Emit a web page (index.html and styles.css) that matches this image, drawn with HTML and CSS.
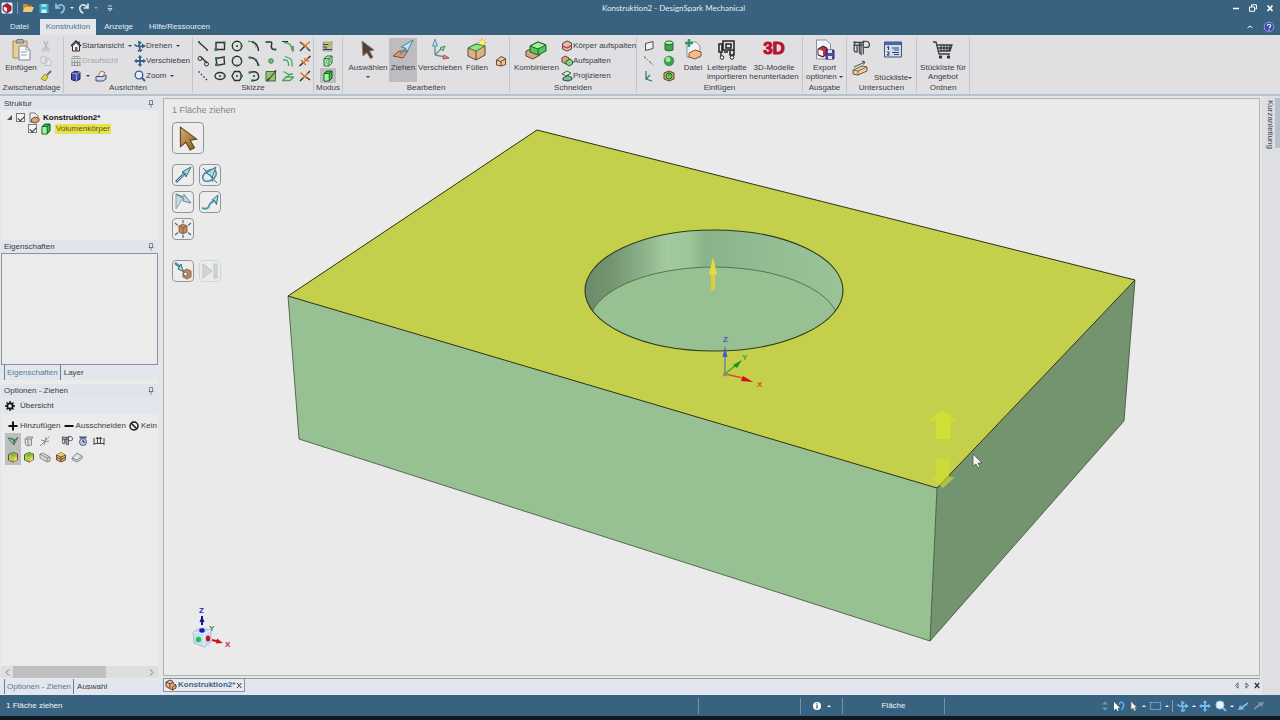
FILE: index.html
```html
<!DOCTYPE html>
<html lang="de">
<head>
<meta charset="utf-8">
<title>Konstruktion2 - DesignSpark Mechanical</title>
<link rel="stylesheet" href="styles.css">
</head>
<body>
<svg class="sprite" aria-hidden="true">
  <defs>
    <linearGradient id="wall" x1="585" x2="843" y1="0" y2="0" gradientUnits="userSpaceOnUse">
      <stop offset="0" stop-color="#6c8a6b"/><stop offset=".1" stop-color="#74946f"/><stop offset=".22" stop-color="#8bb089"/>
      <stop offset=".32" stop-color="#a4cba0"/><stop offset=".41" stop-color="#9cc599"/><stop offset=".47" stop-color="#8ab28b"/>
      <stop offset=".6" stop-color="#8fb990"/><stop offset="1" stop-color="#9ac498"/>
    </linearGradient>
    <linearGradient id="gold" x1="0" x2="1" y1="0" y2="1"><stop offset="0" stop-color="#d2ac70"/><stop offset="1" stop-color="#8a5e24"/></linearGradient>
    <clipPath id="hole"><ellipse cx="714" cy="290.500" rx="129" ry="60.500"/></clipPath>
  </defs>
  <symbol id="cube-green" viewBox="0 0 12 12"><path d="M2 3.500 5 1h5v7L7 11H2z" fill="#2fc43c" stroke="#14501b"/><path d="M2.500 4H7v6.500H2.500z" fill="#a6f0a6"/><path d="M2 3.500h5.200V11M7.200 3.500 10 1" fill="none" stroke="#14501b" stroke-width=".8"/></symbol>
  <symbol id="cube-tan" viewBox="0 0 12 12"><path d="M1.500 4 6 1.500 10.500 4v5L6 11 1.500 9z" fill="#dba878" stroke="#5b3a20" stroke-width=".8"/><path d="M1.500 4 6 1.500 10.500 4 6 6z" fill="#e6d668"/><path d="M1.500 4 6 6v5M6 6l4.500-2M2 6.500 6 8.500l4.500-2.200" fill="none" stroke="#5b3a20" stroke-width=".8"/></symbol>
  <symbol id="cube-lime" viewBox="0 0 12 12"><path d="M1.500 3.500 6 1.500 10.500 3v5.500L6 11 1.500 9z" fill="#dba878" stroke="#4b4a20" stroke-width=".9"/><path d="M1.500 3.500 6 1.500 10.500 3 6 5.500z" fill="#67c33d"/><path d="M2 5l4 1v4.500L2 9z" fill="#a2d83c"/><path d="M7 7l3-1v2.500l-3 2z" fill="#f2e23a"/></symbol>
  <symbol id="pin" viewBox="0 0 6 8"><path d="M1.500.5h3v4h-3zM.5 4.500h5M3 4.500v3" fill="none" stroke="#6f7785" stroke-width=".9"/></symbol>
  <symbol id="caliper" viewBox="0 0 16 14"><path d="M1 2h10M1 4.500h9M2.500 1v3.500q-1.500 3 0 6M4.500 4.500v6l-2 0M6.500 2v9l1.500 1.500V2M10 12.500V1h3q2.500.5 2.500 3T13 6.500h-3" fill="none" stroke="#3f444c" stroke-width="1.100"/></symbol>
  <symbol id="move" viewBox="0 0 12 12"><path d="M6 0 8.300 2.800H6.900v2.300h2.300V3.700L12 6 9.200 8.300V6.900H6.900v2.300h1.400L6 12 3.700 9.200h1.400V6.900H2.800v1.400L0 6l2.800-2.300v1.400h2.300V2.800H3.700z" fill="currentColor"/></symbol>
  <symbol id="spin" viewBox="0 0 12 12"><path d="M4 .5 8 2.500 4.500 4.800zM8 8.500l4-2.500-4-2.500z" fill="currentColor"/><path d="M6.500 2.500Q4.500 4 5.500 7T4 11.500M.5 4.500Q3 7.500 8.500 6M8 9.500 6 11.500" fill="none" stroke="currentColor" stroke-width="1.600"/></symbol>
</svg>

<div class="app">
  <header class="titlebar">
    <div class="quick">
      <svg width="12" height="12" viewBox="0 0 12 12"><rect x=".5" y=".5" width="11" height="11" rx="1.500" fill="#f4f2f4"/><path d="M2 4l4-2.500L10 4v4.500L6 11 2 8.500z" fill="#b91b34" stroke="#4b1220" stroke-width=".7"/><path d="M2.800 4.500 6 6v4L2.800 8z" fill="#fff"/></svg>
      <i class="tick"></i>
      <button aria-label="Öffnen"><svg width="12" height="12" viewBox="0 0 12 12"><path d="M1 2h4l1 1.500h4V10H1z" fill="#c88c34"/><path d="M1 10 3 5h9l-2 5z" fill="#f1c67a"/></svg></button>
      <button aria-label="Speichern"><svg width="12" height="12" viewBox="0 0 12 12"><path d="M1.500 2h9v9h-9z" fill="#35aecb"/><path d="M3.500 2h5v3h-5z" fill="#8fe0ee"/><path d="M3.500 7.500h5V11h-5z" fill="#e3eef2"/></svg></button>
      <button aria-label="Rückgängig"><svg width="12" height="12" viewBox="0 0 12 12"><path d="M2 1.500V6h4.500M2.500 5.500Q5 2 8 3t2 4.500T6.500 11" fill="none" stroke="#8ec3ee" stroke-width="1.700"/></svg></button>
      <b class="caret"></b>
      <button aria-label="Wiederholen"><svg width="12" height="12" viewBox="0 0 12 12"><path d="M10 1.500V6H5.500M9.500 5.500Q7 2 4 3T2 7.500 5.500 11" fill="none" stroke="#d9e2ea" stroke-width="1.700"/></svg></button>
      <b class="caret dim"></b>
      <button class="custom" aria-label="Symbolleiste anpassen"><svg width="6" height="7" viewBox="0 0 6 7"><path d="M1 1h4M1 3.500h4L3 6z" fill="none" stroke="#d9e2ea" stroke-width=".9"/></svg></button>
    </div>
    <h1>Konstruktion2 - DesignSpark Mechanical</h1>
    <div class="wincontrols">
      <button aria-label="Minimieren"><svg width="8" height="8" viewBox="0 0 8 8"><path d="M1 4.500h6" stroke="#fff" stroke-width="1.500"/></svg></button>
      <button aria-label="Wiederherstellen"><svg width="8" height="8" viewBox="0 0 8 8"><path d="M.5 3h5v4.300h-5zM2.500 3V.8h5V5h-2" fill="none" stroke="#fff"/></svg></button>
      <button aria-label="Schließen"><svg width="8" height="8" viewBox="0 0 8 8"><path d="M1.500 1.500l5 5.500M6.500 1.500l-5 5.500" stroke="#fff" stroke-width="1.700"/></svg></button>
    </div>
  </header>

  <nav class="menubar">
    <button>Datei</button>
    <button class="active">Konstruktion</button>
    <button>Anzeige</button>
    <button>Hilfe/Ressourcen</button>
    <span class="grow"></span>
    <button class="icon" aria-label="Menüband minimieren"><svg width="6" height="4" viewBox="0 0 6 4"><path d="M.5 3 3 1l2.500 2" fill="none" stroke="#fff"/></svg></button>
    <button class="icon" aria-label="Hilfe"><svg width="12" height="12" viewBox="0 0 12 12"><circle cx="6" cy="6" r="4.800" fill="#3b4ba8" stroke="#8f9bd6"/><path d="M4.300 4.800Q4.500 3.200 6 3.200t1.700 1.500Q7.700 5.500 6 6.700M6 8.200v1.300" fill="none" stroke="#fff" stroke-width="1.100"/></svg></button>
  </nav>

  <section class="ribbon">
    <div class="group">
      <div class="tools">
        <button class="big w34"><svg width="20" height="24" viewBox="0 0 20 24"><path d="M2 3h14v17H2z" fill="#e9cf95" stroke="#a58c55"/><path d="M6 1.500h6l1 3.500H5z" fill="#aeb4bd" stroke="#777"/><path d="M8 8h7l4 4v10H8z" fill="#f5f7fa" stroke="#7e8798"/><path d="M15 8v4h4M10 14h6M10 17h6" fill="none" stroke="#9aa3b6"/></svg><span>Einfügen</span></button>
        <div class="stack">
          <button aria-label="Ausschneiden"><svg width="12" height="12" viewBox="0 0 12 12"><path d="M4 1l3 7M8 1 5 8" stroke="#b3b5ba" stroke-width="1.300"/><circle cx="4" cy="9.500" r="1.500" fill="none" stroke="#b3b5ba"/><circle cx="8" cy="9.500" r="1.500" fill="none" stroke="#b3b5ba"/></svg></button>
          <button aria-label="Kopieren"><svg width="12" height="12" viewBox="0 0 12 12"><path d="M1 2h5l1 1.500V8H1zM5 4h4l2 2v4.500H5z" fill="#e8e8ea" stroke="#bcbec3"/></svg></button>
          <button aria-label="Format übertragen"><svg width="12" height="12" viewBox="0 0 12 12"><path d="M11 1 7 5" stroke="#60708d" stroke-width="2"/><path d="M5 4l3 3-3 4-4-2.500z" fill="#dcd93a" stroke="#7c7927" stroke-width=".8"/></svg></button>
        </div>
      </div>
      <h2>Zwischenablage</h2>
    </div>

    <div class="group">
      <div class="tools">
        <div class="stack w64">
          <button class="row"><svg width="12" height="12" viewBox="0 0 12 12"><path d="M1 6 6 1l5 5M9 1.500V4" fill="none" stroke="#2b2432" stroke-width="1.300"/><path d="M2.500 6 6 2.500 9.500 6v5h-7z" fill="#f6f3ee" stroke="#2b2432"/><path d="M5 7h2.500v4H5z" fill="#8b5a2c"/></svg><span>Startansicht</span><b class="caret"></b></button>
          <button class="row" disabled><svg width="12" height="12" viewBox="0 0 12 12"><path d="M1 3.500h10M2.500 1.500h7M2 5v6M4.500 5v6M7.500 5v6M10 5v6M1.500 10.500h9M2 7.500h8" fill="none" stroke="#999"/></svg><span>Draufsicht</span></button>
          <div class="row"><button aria-label="Ansichten"><svg width="12" height="12" viewBox="0 0 12 12"><path d="M1.500 3 5 1.200l5 1v7L6.500 11l-5-1.200z" fill="#4a4aa8" stroke="#26265e"/><path d="M1.500 3l5 1V11M6.500 4 10 2.200" fill="none" stroke="#b9b9ea" stroke-width=".8"/></svg></button><b class="caret"></b><button class="pad" aria-label="Blickrichtung"><svg width="12" height="12" viewBox="0 0 12 12"><path d="M1 6.500h7l3-1.500v4l-3 2H1z" fill="#cfd4ee" stroke="#444a76"/><path d="M3 6 6 1l4 1.500L8 6" fill="#f1ebe6" stroke="#a37055"/></svg></button></div>
        </div>
        <div class="stack">
          <button class="row navy"><svg width="12" height="12"><use href="#spin"/></svg><span>Drehen</span><b class="caret"></b></button>
          <button class="row navy"><svg width="12" height="12"><use href="#move"/></svg><span>Verschieben</span></button>
          <button class="row"><svg width="12" height="12" viewBox="0 0 12 12"><circle cx="5" cy="5" r="3.800" fill="#e3f1fb" stroke="#3f5d82" stroke-width="1.300"/><path d="M7.500 7.500 11 11" stroke="#3f5d82" stroke-width="2"/></svg><span>Zoom</span><b class="caret"></b></button>
        </div>
      </div>
      <h2>Ausrichten</h2>
    </div>

    <div class="group">
      <div class="sketch">
        <button aria-label="Linie"><svg viewBox="0 0 12 12"><path d="M1.500 2l9 8" class="k"/><path d="M1 1h2v2H1zM9 9h2v2H9z" class="gd"/></svg></button>
        <button aria-label="Rechteck"><svg viewBox="0 0 12 12"><path d="M2 2.500h8.500v7H2z" class="k"/><path d="M.5 8h3v3h-3zM9 1.500h2.500V4H9z" class="gd"/></svg></button>
        <button aria-label="Kreis"><svg viewBox="0 0 12 12"><circle cx="6" cy="6" r="4.700" class="k"/><path d="M5 5h2v2H5zM9.500 5h2v2h-2z" class="gd"/></svg></button>
        <button aria-label="Tangentialbogen"><svg viewBox="0 0 12 12"><path d="M0 1.500q4-.5 6 1" class="g"/><path d="M4 2q6 1 6.500 9" class="k"/><path d="M6 4q2 1 2 4" class="g pale"/></svg></button>
        <button aria-label="Spline"><svg viewBox="0 0 12 12"><path d="M1.500 2h4q2 0 1 3t1.500 4.500H11" class="k"/><path d="M.5 1h2v2h-2zM9 8.500h2.500v2H9z" class="gd"/></svg></button>
        <button aria-label="Rundung"><svg viewBox="0 0 12 12"><path d="M0 1.500h6M11 6v5.500" class="k thin"/><path d="M2 2.500q8 0 8 8" class="g"/></svg></button>
        <button aria-label="Trimmen"><svg viewBox="0 0 12 12"><path d="M1 11 5.500 6.500M6 6 1 2M7 7l4 4" class="k"/><path d="M2 2l7 6.500M6 6l5-4.500" class="o"/></svg></button>
        <button aria-label="Tangentiallinie"><svg viewBox="0 0 12 12"><circle cx="3" cy="3.500" r="2" class="k thin"/><path d="M4 2l6 6" class="k"/><circle cx="9.500" cy="9" r="2" class="k thin"/></svg></button>
        <button aria-label="Dreipunkt-Rechteck"><svg viewBox="0 0 12 12"><path d="M2 3.500 10 2l.5 7L3 10.500z" class="k"/><path d="M1 8.500h3V11H1zM1 2h2.500v2.500H1zM9 1h2v2H9z" class="gd"/></svg></button>
        <button aria-label="Dreipunkt-Kreis"><svg viewBox="0 0 12 12"><circle cx="6" cy="6" r="4.700" class="k"/><path d="M1.500 2h2v2h-2zM9 3h2v2H9zM5 9.500h2v2H5z" class="gd"/></svg></button>
        <button aria-label="Dreipunkt-Bogen"><svg viewBox="0 0 12 12"><path d="M1.500 2.500q7 0 9 8" class="k"/><path d="M.5 1.500h2.500v2H.5zM9 9h2.500v2H9zM6.500 3.500h2v2h-2z" class="gd"/></svg></button>
        <button aria-label="Punkt"><svg viewBox="0 0 12 12"><circle cx="6" cy="6" r="2.200" class="gl"/></svg></button>
        <button aria-label="Offset"><svg viewBox="0 0 12 12"><path d="M1 5h3q3 1 2.500 6M3 1.500l5 2q2.500 1 2 8" class="g"/></svg></button>
        <button aria-label="Teilen"><svg viewBox="0 0 12 12"><path d="M.5 11 5 7M8 4l3.500-3" class="k"/><path d="M2 5l5 5M5 3.500l5 3M4 8l5-5" class="o"/></svg></button>
        <button aria-label="Konstruktionslinie"><svg viewBox="0 0 12 12"><path d="M1.500 1.500l9 9" class="k dash"/></svg></button>
        <button aria-label="Ellipse"><svg viewBox="0 0 12 12"><ellipse cx="6" cy="6" rx="5" ry="3.500" class="k"/><path d="M5 5h2v2H5zM9.500 5h2v2h-2z" class="gd"/></svg></button>
        <button aria-label="Polygon"><svg viewBox="0 0 12 12"><path d="M3.500 1.500h5L11 6l-2.500 4.500h-5L1 6z" class="k"/><path d="M5 5h2v2H5zM9 5h2.500v2H9z" class="gd"/></svg></button>
        <button aria-label="Bogen"><svg viewBox="0 0 12 12"><path d="M1.500 2.500q8-2.500 9 3T4 10.500" class="k"/><path d="M.5 1.500H3v2H.5zM5 5h2v2H5zM3 9.500h2.500v2H3z" class="gd"/></svg></button>
        <button aria-label="Fläche"><svg viewBox="0 0 12 12"><path d="M1 1.500h9.500V11H1z" fill="#8fc57f" stroke="#3f6f3c"/><path d="M2 11 11 .5" stroke="#4f4220" stroke-width="1.800"/><path d="M4 8l5-6" stroke="#c8c04a"/></svg></button>
        <button aria-label="Projizieren auf Skizze"><svg viewBox="0 0 12 12"><path d="M.5 10.500 4 7h7.500L8 10.500zM1.500 1.500 7 4.500l4-.5M8 4 4 8" class="g"/></svg></button>
        <button aria-label="Biegen"><svg viewBox="0 0 12 12"><path d="M1 11l4-4M8 4l3-3M7 7l4 3" class="k"/><path d="M1.500 2.500 8 8.500M4 8l5-5" class="o"/></svg></button>
      </div>
      <h2>Skizze</h2>
    </div>

    <div class="group">
      <div class="tools center">
        <div class="stack">
          <button aria-label="Skizzenmodus"><svg width="12" height="12" viewBox="0 0 12 12"><path d="M1 2h9v9H1z" fill="#b9bfb9" stroke="#888" stroke-width=".6"/><path d="M1 4.500h6M1 7h4M1 9.500h9" stroke="#444"/><path d="M4 8l6.500-6.500" stroke="#c3b62f" stroke-width="2"/><path d="M3 9l1-2 1 1z" fill="#222"/></svg></button>
          <button aria-label="Schnittmodus"><svg width="12" height="12" viewBox="0 0 12 12"><path d="M2 3.500 5 1h5v7L7 11H2zM2 3.500h5V11M7 3.500 10 1" fill="#ddeadd" stroke="#21752c"/><path d="M3 4l3 6M6 4 3 10M8 3l1 5" stroke="#35bb47" stroke-width=".8"/></svg></button>
          <button class="on" aria-label="3D-Modus"><svg width="12" height="12"><use href="#cube-green"/></svg></button>
        </div>
      </div>
      <h2>Modus</h2>
    </div>

    <div class="group">
      <div class="tools">
        <button class="big w42"><svg width="20" height="24" viewBox="0 0 20 24"><path d="M4 3l12 9-4.500 1.200 3.500 6-2.500 1.500-3.500-6L5 18z" fill="#4e4037" stroke="#8b7c72"/></svg><span>Auswählen</span><b class="caret"></b></button>
        <button class="big w28 on"><svg width="22" height="24" viewBox="0 0 22 24"><path d="M1 18l6-5h9l-5 7-5-1z" fill="#d49a71" stroke="#7e5133"/><path d="M8 16l6-6" stroke="#5e94ac" stroke-width="2"/><path d="M21 2 9 9l4.500 1L15 14z" fill="#bfe3f1" stroke="#47839d"/></svg><span>Ziehen</span></button>
        <button class="big w46"><svg width="22" height="24" viewBox="0 0 22 24"><path d="M6 17V5M6 17l10 2M6 17l6-6" fill="none" stroke="#6c8f94" stroke-width="1.400"/><path d="M6 1 3.500 8h5z" fill="#b9e0ee" stroke="#4e9bb3"/><path d="M16 8l-5 2 3 3z" fill="#9bdf9b" stroke="#379657"/><path d="M20 20l-6 1 1-4z" fill="#e495a4" stroke="#a74561"/></svg><span>Verschieben</span></button>
        <button class="big w28"><svg width="22" height="24" viewBox="0 0 22 24"><path d="M2 10l8-4 9 2v9l-9 5-8-4z" fill="#dfb086" stroke="#5b4630"/><path d="M2 10l8-4 9 2-9 5z" fill="#86ee88" stroke="#2d7e34"/><path d="M10 13v9" stroke="#5b4630"/><path d="M16 0v9M11.500 4.500h9M13 1.500l6 6M19 1.500l-6 6" stroke="#e5a91c"/><circle cx="16" cy="4.500" r="2.200" fill="#fff36b"/></svg><span>Füllen</span></button>
        <button class="lone" aria-label="Weitere"><svg width="12" height="12" viewBox="0 0 12 12"><path d="M1.500 5 6 1.500l4.500 2v6L6 11 1.500 10z" fill="#ecc6a4" stroke="#6b4a30"/><path d="M1.500 5 6 6.500V11M6 6.500 10.500 4" fill="none" stroke="#6b4a30"/></svg></button>
      </div>
      <h2>Bearbeiten</h2>
    </div>

    <div class="group">
      <div class="tools">
        <button class="big w46"><svg width="22" height="24" viewBox="0 0 22 24"><path d="M1 13l7-3 7 2v5l-7 4-7-3z" fill="#d9a77c" stroke="#5b4630"/><path d="M5 8l8-4 8 3v6l-8 4-8-3z" fill="#4fc75b" stroke="#225c2a"/><path d="M5 8l8-4 8 3-8 4z" fill="#a0f0a0" stroke="#225c2a"/><path d="M13 11v6" stroke="#225c2a"/></svg><span>Kombinieren</span></button>
        <div class="stack">
          <button class="row"><svg width="12" height="12" viewBox="0 0 12 12"><path d="M1.500 3.500 6 1l4.500 2v6L6 11 1.500 9z" fill="#e4bfa5" stroke="#54433a"/><path d="M1.500 6 6 8l4.500-2.500" stroke="#b54f60" fill="none" stroke-width="1.500"/></svg><span>Körper aufspalten</span></button>
          <button class="row"><svg width="12" height="12" viewBox="0 0 12 12"><path d="M1 3l3-2 4 2v4L5 9 1 7z" fill="#dfa77c" stroke="#54433a"/><path d="M5 6l4-2 2.500 2v3L8 11 5 9z" fill="#7ed681" stroke="#225c2a"/></svg><span>Aufspalten</span></button>
          <button class="row"><svg width="12" height="12" viewBox="0 0 12 12"><path d="M1 4l5-3 4 2-5 3z" fill="#d2ecd2" stroke="#3d6b46"/><path d="M2 8l5-2.500L11 7.500v2L7 11 2 10z" fill="#7fbf86" stroke="#38436b"/></svg><span>Projizieren</span></button>
        </div>
      </div>
      <h2>Schneiden</h2>
    </div>

    <div class="group">
      <div class="tools">
        <div class="stack w20">
          <button aria-label="Ebene"><svg width="12" height="12" viewBox="0 0 12 12"><path d="M2.500 3.500 10 1.500v7L2.500 10.500z" fill="#f1f1f1" stroke="#4c4c4c"/></svg></button>
          <button aria-label="Achse"><svg width="12" height="12" viewBox="0 0 12 12"><path d="M1 1.500l10 9" stroke="#555" stroke-dasharray="3 1.500 1 1.500"/></svg></button>
          <button aria-label="Ursprung"><svg width="12" height="12" viewBox="0 0 12 12"><path d="M3 1v8l6 2M3 9l4-4" fill="none" stroke="#3f6775" stroke-width="1.200"/></svg></button>
        </div>
        <div class="stack w20">
          <button aria-label="Zylinder"><svg width="12" height="12" viewBox="0 0 12 12"><path d="M2 3v7q4 2 8 0V3z" fill="#3fa649" stroke="#2a6a33"/><ellipse cx="6" cy="2.800" rx="4" ry="1.900" fill="#b5efb5" stroke="#2a6a33"/></svg></button>
          <button aria-label="Kugel"><svg width="12" height="12" viewBox="0 0 12 12"><circle cx="6" cy="6" r="4.800" fill="#37a344" stroke="#2a6a33" stroke-width=".6"/><circle cx="5" cy="4.500" r="2.500" fill="#a0e5a0"/></svg></button>
          <button aria-label="Bohrung"><svg width="12" height="12" viewBox="0 0 12 12"><path d="M1 3l5-2 5 2v6l-5 2-5-2z" fill="#c9a95e" stroke="#5b4a20"/><circle cx="6" cy="6" r="3" fill="#6ace5e" stroke="#2a6a33"/><path d="M6 2.500V6" stroke="#264"/></svg></button>
        </div>
        <button class="big w24"><svg width="20" height="24" viewBox="0 0 20 24"><path d="M4 4h9l4 4v11H4z" fill="#f2f4f8" stroke="#8f94a5"/><path d="M6 1v8M2 5h8" stroke="#2f9a68" stroke-width="2.500"/><path d="M6 15l6-3 6 2v4l-6 3-6-2z" fill="#f0bf8d" stroke="#7b5231"/></svg><span>Datei</span></button>
        <button class="big w44"><svg width="20" height="24" viewBox="0 0 20 24"><path d="M6 3h11v9H6zM9 6h5v4H9zM2 6h3v8H2zM13 12h4v5h-4z" fill="none" stroke="#222" stroke-width="1.500"/><path d="M4 14v4M15 17v2M7 14h4" stroke="#222" stroke-width="1.300"/><circle cx="5" cy="19.500" r="1.800" fill="#fff" stroke="#222"/><circle cx="15" cy="19.500" r="1.800" fill="#fff" stroke="#222"/></svg><span>Leiterplatte importieren</span></button>
        <button class="big w50"><span class="logo3d">3D</span><span>3D-Modelle herunterladen</span></button>
      </div>
      <h2>Einfügen</h2>
    </div>

    <div class="group">
      <div class="tools center">
        <button class="big w42"><svg width="20" height="24" viewBox="0 0 20 24"><path d="M1.500 2h10l4 4v15h-14z" fill="#f4f5fa" stroke="#888da2"/><path d="M3 11l5-3 4 2v6l-4 3-5-2z" fill="#c33146" stroke="#222"/><path d="M3.500 11.500 8 13v5l-4.500-1.500z" fill="#fff"/><path d="M11 12h8v9h-8z" fill="#534a9a" stroke="#332b63"/><path d="M13 12h4v3h-4zM13 18h4v3h-4z" fill="#dfe2f5"/></svg><span>Export<br>optionen <b class="caret"></b></span></button>
      </div>
      <h2>Ausgabe</h2>
    </div>

    <div class="group">
      <div class="tools">
        <div class="stack two">
          <button aria-label="Messen"><svg width="18" height="16"><use href="#caliper"/></svg></button>
          <button aria-label="Masse"><svg width="16" height="16" viewBox="0 0 16 16"><path d="M1 10l9-4 5 1v4l-9 4-5-1z" fill="#efcca2" stroke="#6f573b"/><path d="M1 10l5 1 9-4M6 11v4" fill="none" stroke="#6f573b" stroke-width=".8"/><path d="M2 7l10-4.500M10 1l3 1-1.500 2.500" fill="none" stroke="#2e5a3e"/></svg></button>
        </div>
        <button class="big drop w44"><svg width="20" height="20" viewBox="0 0 20 20"><path d="M1.500 2h17v15h-17z" fill="#d2dbee" stroke="#3f4f83"/><path d="M2 2h16v3H2z" fill="#4e64a0"/><path d="M9 8h7M11 10h5M9 12.500h7M11 14.500h5" stroke="#344576"/><path d="M4 7.500l1.500-1V10M4 12h2v1.500L4 15h2.500" fill="none" stroke="#222" stroke-width=".9"/></svg><span>Stückliste<b class="caret"></b></span></button>
      </div>
      <h2>Untersuchen</h2>
    </div>

    <div class="group">
      <div class="tools center">
        <button class="big w50"><svg width="22" height="24" viewBox="0 0 22 24"><path d="M1 4h3l3 12h11M5 7h15l-2 6H7M9 7v6M12 7v6M15 7v6M18 7l-1 6M6 10h13" fill="none" stroke="#3b3d41" stroke-width="1.300"/><circle cx="8.500" cy="19" r="1.700" fill="#333"/><circle cx="16.500" cy="19" r="1.700" fill="#333"/></svg><span>Stückliste für Angebot</span></button>
      </div>
      <h2>Ordnen</h2>
    </div>
  </section>

  <main class="workspace">
    <aside class="side">
      <section class="panel tree">
        <h3>Struktur<svg width="6" height="8"><use href="#pin"/></svg></h3>
        <ul>
          <li><i class="expander"></i><label><input type="checkbox" checked><svg width="12" height="12" viewBox="0 0 12 12"><path d="M2 1h5l3 3v6H2z" fill="#eee" stroke="#777"/><path d="M3.500 7 7 5l4 1.500V9l-3.500 2L3.500 10z" fill="#d8a87a" stroke="#7b5231"/></svg><strong>Konstruktion2*</strong></label></li>
          <li class="child"><label><input type="checkbox" checked><svg width="12" height="12"><use href="#cube-green"/></svg><mark>Volumenkörper</mark></label></li>
        </ul>
      </section>

      <section class="panel props">
        <h3>Eigenschaften<svg width="6" height="8"><use href="#pin"/></svg></h3>
        <div class="propbox"></div>
        <div class="tabs"><button class="active">Eigenschaften</button><button>Layer</button></div>
      </section>

      <section class="panel options">
        <h3>Optionen - Ziehen<svg width="6" height="8"><use href="#pin"/></svg></h3>
        <button class="overview"><svg width="10" height="10" viewBox="0 0 10 10"><circle cx="5" cy="5" r="2.700" fill="none" stroke="#111" stroke-width="1.700"/><path d="M5 0v2M5 8v2M0 5h2M8 5h2M1.500 1.500l1.300 1.300M7.200 7.200l1.300 1.300M8.500 1.500 7.200 2.800M2.800 7.200 1.500 8.500" stroke="#111" stroke-width="1.400"/></svg>Übersicht</button>
        <div class="modes">
          <button><svg width="10" height="10" viewBox="0 0 10 10"><path d="M5 .5v9M.5 5h9" stroke="#111" stroke-width="2"/></svg>Hinzufügen</button>
          <button><svg width="10" height="10" viewBox="0 0 10 10"><path d="M.5 5h9" stroke="#111" stroke-width="2"/></svg>Ausschneiden</button>
          <button><svg width="10" height="10" viewBox="0 0 10 10"><circle cx="5" cy="5" r="4" fill="none" stroke="#111" stroke-width="1.400"/><path d="M2.200 2.200l5.600 5.600" stroke="#111" stroke-width="1.400"/></svg>Kein</button>
        </div>
        <div class="iconrow">
          <button class="on" aria-label="Kante"><svg width="12" height="12" viewBox="0 0 12 12"><path d="M1 3l6 7V4zM7 9l4-7-5 5M3 3l6 4" fill="none" stroke="#337a4b"/></svg></button>
          <button aria-label="Rundung"><svg width="12" height="12" viewBox="0 0 12 12"><path d="M2 4l2-2h6l-1.500 2v6l-4 1-2-1.500zM2 4h6.500M5 4v6.500" fill="#ddd" stroke="#85888c"/></svg></button>
          <button aria-label="Fase"><svg width="12" height="12" viewBox="0 0 12 12"><path d="M1 11 10.500 1.500M7 2l-1 5 4-1M2 5l4 1-1 4" fill="none" stroke="#8a8d91"/></svg></button>
          <button class="gap" aria-label="Maß"><svg width="12" height="12"><use href="#caliper"/></svg></button>
          <button aria-label="Bis"><svg width="12" height="12" viewBox="0 0 12 12"><path d="M2 1.500h8l-1 2H3z" fill="#4b4f82"/><circle cx="6" cy="7" r="3.500" fill="#c4c6ee" stroke="#565a91"/><path d="M6 5v2h2" fill="none" stroke="#333"/></svg></button>
          <button aria-label="Lineal"><svg width="12" height="12" viewBox="0 0 12 12"><path d="M1 3v7M11 3v7M1 8.500h10M4.500 2v6M7.500 2v6M3 4l1.500-2L6 4M6 4l1.500-2L9 4" fill="none" stroke="#444"/></svg></button>
        </div>
        <div class="iconrow">
          <button class="on" aria-label="Volumen"><svg width="12" height="12"><use href="#cube-lime"/></svg></button>
          <button aria-label="Fläche ziehen"><svg width="12" height="12"><use href="#cube-lime"/></svg></button>
          <button aria-label="Kante ziehen"><svg width="12" height="12" viewBox="0 0 12 12"><path d="M1 3l3-1 7 4v4L8 11 1 7zM1 3l7 4v4M8 7l3-1" fill="#d5d5d7" stroke="#8b8d91"/></svg></button>
          <button aria-label="Körper"><svg width="12" height="12"><use href="#cube-tan"/></svg></button>
          <button aria-label="Oberfläche"><svg width="12" height="12" viewBox="0 0 12 12"><path d="M1 7l5-5 5 3v2.500L6 11 1 8.500zM1 7l5 2 5-4" fill="#e0e0e2" stroke="#86888c"/></svg></button>
        </div>
        <div class="hscroll"><svg width="5" height="7" viewBox="0 0 5 7"><path d="M4 .5 1 3.500l3 3" fill="none" stroke="#777"/></svg><div class="track"><i></i></div><svg width="5" height="7" viewBox="0 0 5 7"><path d="M1 .5l3 3-3 3" fill="none" stroke="#777"/></svg></div>
        <div class="tabs"><button class="active">Optionen - Ziehen</button><button>Auswahl</button></div>
      </section>
    </aside>

    <section class="document">
      <div class="viewport">
        <svg class="scene" viewBox="164 99 1095 576" role="img" aria-label="Quader mit Bohrung">
          <path d="M288 296 937 488 930 641 299 439z" fill="#97c193"/>
          <path d="M1135 280 1124 421 930 641 937 488z" fill="#74946f"/>
          <path d="M537 130 1135 280 937 488 288 296z" fill="#c4d04b"/>
          <path d="M288 296 299 439 930 641 1124 421 1135 280M937 488 930 641" fill="none" stroke="#3c4f35" stroke-width=".8"/>
          <path d="M537 130 1135 280 937 488 288 296z" fill="none" stroke="#2e2f12"/>
          <g clip-path="url(#hole)">
            <path d="M580 225h270v130H580z" fill="url(#wall)"/>
            <ellipse cx="714" cy="324" rx="125" ry="57" fill="#97c193" stroke="#45633f" stroke-width=".8"/>
          </g>
          <ellipse cx="714" cy="290.500" rx="129" ry="60.500" fill="none" stroke="#2e3a18" stroke-width="1.100"/>
          <path d="M711 275h4v15h-4z" fill="#dfcf31"/><path d="M713 257l4 17q-4 2-8 0z" fill="#e4dc3c"/>
          <path d="M725 375v-20" stroke="#777f9b" stroke-width="1.500"/><path d="M725 346l2.500 11h-5z" fill="#4a5ad4"/>
          <path d="M725 374l11-9" stroke="#3aa62d" stroke-width="1.500"/><path d="M742 360l-5 8-4-3z" fill="#169d17"/>
          <path d="M725 374l18 4" stroke="#d8541e" stroke-width="1.500"/><path d="M753 382l-12-1 2-5z" fill="#cf1010"/>
          <circle cx="725" cy="374.500" r="2" fill="#828b80"/>
          <g class="axis"><text x="723" y="342" fill="#4657ce">Z</text><text x="742" y="360" fill="#3fa828">Y</text><text x="757" y="387" fill="#d0501c">X</text></g>
          <g fill="#d2e22d"><path d="M942 410l15 11h-6l-1 18h-14V421h-8z" opacity=".8"/><path d="M936 459h13v18h6l-12 11-12-11h5z" opacity=".6"/></g>
          <path d="M973 454v12l3-2 2 4 2-1-2-4h4z" fill="#f5f5f5" stroke="#444" stroke-width=".7"/>
          <path d="M193 632l7-4 11 2v12l-7 5-10-4z" fill="#c8dcee" stroke="#a8bed6"/><path d="M193 632l11 2v12M204 634l7-4" fill="none" stroke="#eaf3fb"/>
          <circle cx="198.500" cy="639.500" r="2.700" fill="#23c53a"/><ellipse cx="202" cy="630.500" rx="2.700" ry="2.200" fill="#1317c8"/><ellipse cx="208" cy="638.500" rx="2.200" ry="3" fill="#c51624"/>
          <path d="M201 616h2v9h-2z" fill="#14149b"/><path d="M202 616l2.500 6h-5z" fill="#14149b"/><path d="M212 640l6 1.500" stroke="#c51624" stroke-width="2"/><path d="M223 643l-7 .5 1-5z" fill="#c51624"/>
          <g class="axis"><text x="199" y="613" fill="#3522bd">Z</text><text x="209" y="631" fill="#2d8e3d">Y</text><text x="225" y="647" fill="#cd2140">X</text></g>
        </svg>
        <div class="overlay">
          <p>1 Fläche ziehen</p>
          <button class="guide large" aria-label="Auswählen"><svg viewBox="0 0 24 24"><path d="M5 2l15 11-6 1 4 7-4 2-4-7-5 4z" fill="url(#gold)" stroke="#5f421b"/></svg></button>
          <div class="guides">
            <button class="guide" aria-label="Richtung"><svg viewBox="0 0 20 20"><path d="M3 17 12 8" stroke="#37707f" stroke-width="2.500"/><path d="M3.500 16.500 12 8" stroke="#a8dbe4"/><path d="M18 2 9 7l3 1 1 4z" fill="#a8dbe4" stroke="#37707f"/></svg></button>
            <button class="guide" aria-label="Drehen"><svg viewBox="0 0 20 20"><path d="M3 3l14 15" stroke="#54656e"/><ellipse cx="9.500" cy="10.500" rx="7.500" ry="5" fill="none" stroke="#4d9aa8" stroke-width="1.800" transform="rotate(-35 9.500 10.500)"/><path d="M5 5q7 3 8 12" fill="none" stroke="#4d9aa8" stroke-width="1.300"/><path d="M16 2 6 8l4 2 2 3z" fill="#a8dbe4" stroke="#37707f"/></svg></button>
            <button class="guide" aria-label="Verjüngen"><svg viewBox="0 0 20 20"><path d="M3 2v15L10 6z" fill="#cbd8de" stroke="#8fa1aa"/><path d="M3 2l8 3V2.500l7 8.500-8-2 1-2z" fill="#b6dfe6" stroke="#5e8b95"/></svg></button>
            <button class="guide" aria-label="Entlang Bahn"><svg viewBox="0 0 20 20"><path d="M2 16q6 2 7-2t6-5" fill="none" stroke="#4d9aa8" stroke-width="2"/><path d="M18 3l-6 5 2.500.5 2 4z" fill="#a8dbe4" stroke="#37707f"/></svg></button>
            <button class="guide" aria-label="Skalieren"><svg viewBox="0 0 20 20"><path d="M2 4l3 2.500M18 4l-3 2.500M2 16l3-2.500M18 16l-3-2.500M10 1v3M10 16v3" stroke="#587182" stroke-width="1.300"/><path d="M6 7l4-2 4 2v6l-4 2-4-2z" fill="#c28a60" stroke="#7b5231" stroke-width=".8"/><path d="M6 7l4 2v6M10 9l4-2" fill="none" stroke="#7b5231" stroke-width=".8"/></svg></button>
          </div>
          <div class="guides">
            <button class="guide" aria-label="Bis zu"><svg viewBox="0 0 20 20"><path d="M2 2l5 4" stroke="#3f8fa2" stroke-width="2.500"/><path d="M5 8 8 3l1.500 5 2 3z" fill="#9fd5e2" stroke="#37707f"/><path d="M10 10l4-2 4 2v6l-4 2-4-2z" fill="#c28a60" stroke="#7b5231" stroke-width=".8"/><circle cx="12.500" cy="13" r="2" fill="#eee" stroke="#666"/></svg></button>
            <button class="guide off" aria-label="Fertigstellen" disabled><svg viewBox="0 0 20 20"><path d="M3 3l9 7-9 7zM14 3h3v14h-3z" fill="#b9cdbf" stroke="#9bb5a4"/></svg></button>
          </div>
        </div>
      </div>
      <div class="doctabs">
        <button class="doctab"><svg width="12" height="12" viewBox="0 0 12 12"><path d="M1 3l4-2 3 1.500v2L11 6v3L7.500 11 1 7.500z" fill="#e3b58a" stroke="#68452a"/><path d="M1 3l4 2v4M5 5l3-1.500M7.500 11V8L11 6" fill="none" stroke="#68452a"/></svg>Konstruktion2*<svg width="7" height="7" viewBox="0 0 7 7"><path d="M1 1l4.500 5M5.500 1 1 6" stroke="#333"/></svg></button>
        <span class="grow"></span>
        <div class="docnav">
          <button aria-label="Zurück"><svg width="6" height="7" viewBox="0 0 6 7"><path d="M4 .8v5.400L1.500 3.500z" fill="none" stroke="#444" stroke-width=".8"/></svg></button>
          <button aria-label="Vor"><svg width="6" height="7" viewBox="0 0 6 7"><path d="M2 .8v5.400l2.500-2.700z" fill="none" stroke="#444" stroke-width=".8"/></svg></button>
          <button aria-label="Dokument schließen"><svg width="6" height="7" viewBox="0 0 6 7"><path d="M.8 1l4.500 5M5.200 1 .8 6" stroke="#333" stroke-width="1.200"/></svg></button>
        </div>
      </div>
    </section>

    <aside class="rail"><button>Kurzanleitung</button></aside>
  </main>

  <footer class="status">
    <div class="msg">1 Fläche ziehen</div>
    <div></div>
    <div class="mid"><svg width="8" height="8" viewBox="0 0 8 8"><circle cx="4" cy="4" r="4" fill="#fff"/><path d="M4 1.300v1.200M4 3.300v3.200" stroke="#38627f" stroke-width="1.400"/></svg><b class="caret up"></b></div>
    <div class="mid">Fläche</div>
    <div class="statustools">
      <svg width="8" height="12" viewBox="0 0 8 12"><path d="M1 4.500 4 1.500l3 3zM1 7.500l3 3 3-3z" fill="#7893a9"/></svg>
      <button aria-label="Zurück auswählen"><svg width="12" height="12" viewBox="0 0 12 12"><path d="M1 2v8l2-1.500L4.500 11l1-.5L4.500 8H7z" fill="#fff"/><path d="M6 4.500Q8 .5 10 3t-1.500 7" fill="none" stroke="#5ba7e2" stroke-width="1.700"/></svg></button>
      <button aria-label="Auswahlfilter"><svg width="10" height="12" viewBox="0 0 10 12"><path d="M2 1.500v8L4 8l1.500 3 1.500-1L5.500 7.500H8z" fill="#fff" stroke="#7d6b5e" stroke-width=".6"/></svg></button><b class="caret up"></b>
      <button aria-label="Rahmen"><svg width="13" height="12" viewBox="0 0 13 12"><path d="M1.500 2.500h10v7h-10z" fill="none" stroke="#75bcf0" stroke-width="1.200" stroke-dasharray="2 1"/></svg></button><b class="caret up"></b>
      <i class="tick"></i>
      <button aria-label="Drehen"><svg width="12" height="12"><use href="#spin"/></svg></button><b class="caret up"></b>
      <button aria-label="Verschieben"><svg width="12" height="12"><use href="#move"/></svg></button>
      <button aria-label="Zoom"><svg width="12" height="12" viewBox="0 0 12 12"><circle cx="5" cy="5" r="4" fill="#e7f3fc" stroke="#9bcdf2"/><path d="M8 8l3 3" stroke="#77bdf0" stroke-width="2"/></svg></button><b class="caret up"></b>
      <button aria-label="Vorherige Ansicht"><svg width="12" height="12" viewBox="0 0 12 12"><path d="M1 10l2-5 1.500 1.500L11 2v2L6 8l1 1.500z" fill="#77bdf0"/></svg></button>
      <button aria-label="Nächste Ansicht"><svg width="12" height="12" viewBox="0 0 12 12"><path d="M11 2 9 7 7.500 5.500 1 10V8l5-4-1-1.500z" fill="#7e97a8"/></svg></button>
    </div>
  </footer>
  <div class="taskbar"></div>
</div>
</body>
</html>
```
FILE: styles.css
```css
* { box-sizing: border-box; }
body { margin: 0; background: #101820; font: 8px/10px "Liberation Sans", Arial, sans-serif; color: #3c3c44; }
button { margin: 0; padding: 0; border: 0; background: none; font: inherit; color: inherit; display: flex; align-items: center; }
h1, h2, h3, p, ul { margin: 0; padding: 0; font: inherit; list-style: none; }
svg { display: block; flex: none; }
.sprite { position: absolute; width: 0; height: 0; }
.grow { flex: 1; }
.app { min-height: 100vh; display: flex; flex-direction: column; }

.caret { flex: none; width: 0; height: 0; border: 2px solid transparent; border-top-color: currentColor; border-bottom: 0; display: inline-block; vertical-align: middle; }
.caret.up { border-top: 0; border-bottom: 2px solid currentColor; }
.caret.dim { opacity: .5; }
.tick { width: 1px; height: 12px; background: #7b9cb3; }

.titlebar { height: 19px; display: grid; grid-template-columns: 1fr auto 1fr; align-items: start; background: #38627f; color: #e6eef4; }
.titlebar h1 { font-family: Lato, "Noto Sans", sans-serif; line-height: 16px; padding-left: 67px; }
.quick { display: flex; align-items: center; gap: 4px; padding-left: 1px; height: 16px; }
.quick .custom { margin-left: 5px; }
.wincontrols { display: flex; align-items: center; height: 16px; justify-content: flex-end; gap: 9px; padding-right: 6px; }

.menubar { height: 16px; display: flex; background: #38627f; color: #e6eef4; padding: 0 4px 0 2px; }
.menubar button { padding: 0 8px; }
.menubar .active { background: #e4e6ea; color: #4b7590; padding: 0 6px; margin-left: 3px; }
.menubar .icon { padding: 0 1px; margin-left: 8px; }

.ribbon { display: grid; grid-template-columns: 64px 129px 121px 29px 167px 127px 166px 44px 70px 53px; min-height: 61px; background: #e0e0e2; border-bottom: 2px solid #b7c2cf; padding: 2px 0 1px; }
.group { border-right: 1px solid #c2c5ca; display: flex; flex-direction: column; min-width: 0; }
.group h2 { text-align: center; line-height: 10px; white-space: nowrap; }
.tools { display: flex; height: 46px; padding: 1px 0 0 4px; }
.tools.center { justify-content: center; padding-left: 0; }
.stack { display: flex; flex-direction: column; }
.stack > * { height: 15px; padding: 0 2px; }
.stack.two > * { height: 20px; padding: 0 1px; }
.row { display: flex; align-items: center; white-space: nowrap; }
.row .caret { margin-left: 4px; }
.row .pad { margin-left: 5px; }
.row:disabled { color: #a5a7ac; }
.navy svg { color: #35618c; }
.big { flex-direction: column; text-align: center; height: 44px; }
.big span { line-height: 9px; }
.big > svg { margin-bottom: 1px; }
.big > .caret { margin-top: 4px; }
.big.drop { justify-content: space-between; padding: 2px 0 0; }
.w20 { width: 20px; }
.w24 { width: 24px; }
.w28 { width: 28px; }
.w34 { width: 34px; }
.w42 { width: 42px; }
.w44 { width: 44px; }
.w46 { width: 46px; }
.w50 { width: 50px; }
.w64 { width: 64px; }
.on { background: #bdbdbf; }
.lone { padding-left: 4px; }
.big .logo3d { height: 25px; font: bold 17px/22px "Liberation Sans", Arial, sans-serif; color: #b5132f; -webkit-text-stroke: 1px #b5132f; }
.sketch { height: 46px; padding: 1px 0 0 2px; display: grid; grid-template-columns: repeat(7, 1fr); grid-template-rows: repeat(3, 15px); }
.sketch button { justify-content: center; }
.sketch svg { width: 12px; height: 12px; }
.k { fill: none; stroke: #2d3230; stroke-width: 1.4; }
.k.thin { stroke-width: 1; }
.k.dash { stroke-dasharray: 1.5 2; }
.g { fill: none; stroke: #48a45a; stroke-width: 1.3; }
.g.pale { opacity: .5; }
.gd { fill: #2f7a41; }
.gl { fill: #6fcf7f; stroke: #2f7a41; }
.o { fill: none; stroke: #d9772f; stroke-width: 1.5; }

.workspace { flex: 1; display: grid; grid-template-columns: 159px 1fr 20px; background: #e2e5eb; min-height: 0; }
.side { display: flex; flex-direction: column; padding: 1px; background: #e3e6ec; }
.panel { display: flex; flex-direction: column; background: #ebebeb; }
.panel h3 { display: flex; justify-content: space-between; align-items: center; height: 13px; padding: 0 4px 0 3px; background: #e0e4eb; }
.tree { height: 143px; }
.props { height: 144px; }
.options { flex: 1; }
.tree li { display: flex; align-items: center; height: 11px; padding-left: 6px; }
.tree ul { padding-top: 2px; }
.tree .child { padding-left: 27px; }
.tree label { display: flex; align-items: center; gap: 3px; }
.tree strong { color: #111; }
.tree mark { background: #e9e14b; color: #55551c; padding: 0 1px; }
.tree input { appearance: none; margin: 0; width: 9px; height: 9px; border: 1px solid #777; background: #f4f4f4; display: grid; place-items: center; }
.tree input:checked::before { content: ""; width: 5px; height: 3px; border: solid #333; border-width: 0 0 1px 1px; transform: rotate(-45deg); }
.expander { width: 0; height: 0; border: solid transparent; border-width: 0 0 5px 5px; border-bottom-color: #555; margin-right: 4px; }
.propbox { height: 112px; border: 1px solid #8d929f; background: #ebebeb; }
.tabs { display: flex; height: 15px; padding-left: 3px; background: #e3e6ed; }
.tabs button { padding: 0 3px; }
.tabs .active { color: #587c97; border: solid #65809a; border-width: 0 1px; padding: 0 2px; }
.overview { height: 17px; padding-left: 4px; gap: 5px; background: #e3e6ec; }
.modes { display: flex; justify-content: space-between; padding: 7px 1px 2px 7px; }
.modes button { gap: 2px; }
.iconrow { display: flex; padding-left: 4px; }
.iconrow button { width: 16px; height: 16px; justify-content: center; }
.iconrow .gap { margin-left: 6px; }
.hscroll { margin-top: auto; margin-bottom: 1px; height: 12px; display: flex; align-items: center; gap: 3px; padding: 0 4px; background: #dedee0; }
.track { flex: 1; height: 12px; }
.track i { display: block; width: 70%; height: 100%; background: #bfbfc1; }

.document { display: flex; flex-direction: column; padding: 2px 0 0 4px; min-width: 0; }
.viewport { position: relative; flex: 1; border: 1px solid #b5b49c; background: #eaeaea; min-height: 200px; }
.scene { position: absolute; inset: 0; width: 100%; height: 100%; }
.axis { font: bold 8px "Liberation Sans", Arial, sans-serif; }
.overlay { position: relative; width: 80px; padding: 5px 0 0 8px; }
.overlay p { font: 9px/12px "Liberation Sans", Arial, sans-serif; color: #85858a; white-space: nowrap; }
.guide { width: 22px; height: 22px; border: 1px solid #91949b; border-radius: 4px; justify-content: center; background: #ededed; }
.guide svg { width: 20px; height: 20px; }
.guide.large { width: 32px; height: 32px; margin-top: 6px; }
.guide.large svg { width: 26px; height: 26px; }
.guide.off { opacity: .6; border-color: #c3c8c5; }
.guides { display: grid; grid-template-columns: 22px 22px; gap: 5px; margin-top: 10px; }
.guides + .guides { margin-top: 20px; }
.doctabs { display: flex; height: 19px; padding-top: 2px; }
.doctab { height: 14px; gap: 1px; padding: 0 1px; border: 1px solid #8593a5; background: #e8eaee; font-weight: bold; color: #3d6584; }
.docnav { display: flex; gap: 4px; align-items: center; height: 14px; }
.doctabs .grow, .docnav { border-top: 1px solid #9b9d96; }
.rail { padding-top: 2px; background: #dedfe2; margin-left: 2px; display: flex; align-items: flex-start; justify-content: flex-end; }
.rail button { writing-mode: vertical-rl; height: 50px; padding: 2px 0 0; border-right: 5px solid #b9c0cb; }

.status { height: 21px; display: grid; grid-template-columns: 1fr 102px 42px 102px 335px; align-items: center; background: #38627f; color: #f1f6fa; }
.status > div { display: flex; align-items: center; height: 16px; border-right: 1px solid #6f92aa; }
.status > .msg { padding-left: 6px; }
.status > .mid { justify-content: center; gap: 6px; }
.status > .statustools { border: 0; justify-content: flex-end; gap: 4px; padding-right: 15px; }
.statustools .caret { margin: 0 -1px; }
.statustools button { color: #77bdf0; }
.taskbar { height: 4px; background: #101820; }
```
